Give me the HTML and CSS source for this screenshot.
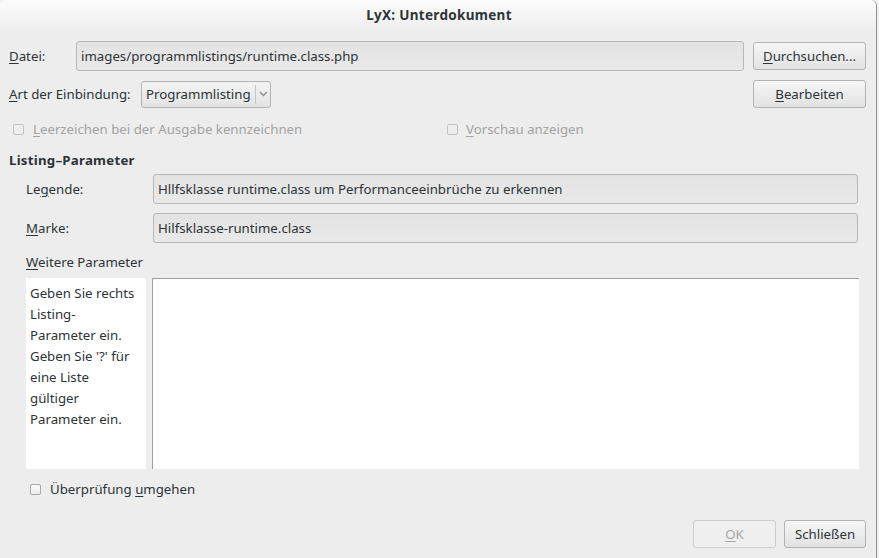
FILE: index.html
```html
<!DOCTYPE html>
<html>
<head>
<meta charset="utf-8">
<link rel="stylesheet" href="styles.css">
</head>
<body>
<div class="window">
  <div class="titlebar">LyX: Unterdokument</div>
  <div class="content">
    <div class="row row-file">
      <span class="lbl lbl-file"><u>D</u>atei:</span>
      <div class="field field-file">images/programmlistings/runtime.class.php</div>
      <button class="btn"><u>D</u>urchsuchen...</button>
    </div>
    <div class="row row-type">
      <span class="lbl lbl-type"><u>A</u>rt der Einbindung:</span>
      <div class="combo"><span class="combo-text">Programmlisting</span><span class="combo-arrow"><svg width="9" height="6" viewBox="0 0 9 6"><path d="M1 1 L4.5 4.5 L8 1" fill="none" stroke="#8a8a8a" stroke-width="1.3"/></svg></span></div>
      <div class="spacer"></div>
      <button class="btn"><u>B</u>earbeiten</button>
    </div>
    <div class="row row-checks">
      <label class="check disabled check-a"><span class="box"></span><span><u>L</u>eerzeichen bei der Ausgabe kennzeichnen</span></label>
      <label class="check disabled check-b"><span class="box"></span><span><u>V</u>orschau anzeigen</span></label>
    </div>
    <div class="section-title">Listing–Parameter</div>
    <div class="group">
      <div class="row row-param">
        <span class="lbl lbl-param">Le<u>g</u>ende:</span>
        <div class="field field-param">Hllfsklasse runtime.class um Performanceeinbrüche zu erkennen</div>
      </div>
      <div class="row row-param row-param2">
        <span class="lbl lbl-param"><u>M</u>arke:</span>
        <div class="field field-param">Hilfsklasse-runtime.class</div>
      </div>
      <div class="more-title"><u>W</u>eitere Parameter</div>
      <div class="more">
        <div class="hint">Geben Sie rechts<br>Listing-<br>Parameter ein.<br>Geben Sie '?' für<br>eine Liste<br>gültiger<br>Parameter ein.</div>
        <div class="textarea"></div>
      </div>
      <label class="check check-bypass"><span class="box"></span><span>Überprüfung <u>u</u>mgehen</span></label>
    </div>
    <div class="footer">
      <button class="btn btn-ok" disabled><u>O</u>K</button>
      <button class="btn btn-close">Schließen</button>
    </div>
  </div>
</div>
</body>
</html>
```
FILE: styles.css
```css
* { box-sizing: border-box; }
html, body {
  margin: 0;
  padding: 0;
  background: #f2f2f2;
}
body {
  font-family: "Noto Sans", "DejaVu Sans", sans-serif;
  font-size: 13.25px;
  color: #2e3436;
  width: 879px;
  height: 558px;
  overflow: hidden;
}
u { text-decoration: underline; text-underline-offset: 2px; text-decoration-thickness: 1px; }
.window {
  width: 877px;
  height: 558px;
  background: #ededed;
  border-right: 1px solid #8e8e8e;
  border-top-left-radius: 6px;
  border-top-right-radius: 6px;
  display: flex;
  flex-direction: column;
}
.titlebar {
  height: 32px;
  line-height: 30px;
  text-align: center;
  font-weight: bold;
  font-size: 13.5px;
  letter-spacing: 0.3px;
  color: #2e3436;
  background: linear-gradient(#fdfdfd, #ededed);
  border-top-left-radius: 6px;
  border-top-right-radius: 6px;
  padding-left: 2px;
}
.content {
  flex: 1;
  padding: 9px 10px 9px 9px;
  display: flex;
  flex-direction: column;
}
.row {
  display: flex;
  align-items: center;
}
.lbl { white-space: nowrap; }
.lbl-file { width: 67px; }
.field {
  height: 30px;
  line-height: 28px;
  padding: 0 4px;
  border: 1px solid #b9b9b9;
  border-radius: 3px;
  background: linear-gradient(#e3e3e3, #e9e9e9);
  white-space: nowrap;
  overflow: hidden;
}
.field-file { width: 668px; margin-right: 9px; }
.btn {
  font-family: inherit;
  font-size: 13.25px;
  color: #2e3436;
  height: 28px;
  width: 113px;
  border: 1px solid #b3b3b3;
  border-radius: 3px;
  background: linear-gradient(#f6f6f6, #e2e2e2);
  padding: 0;
}
.row-type { margin-top: 9px; height: 28px; }
.lbl-type { width: 132px; }
.combo {
  display: flex;
  align-items: center;
  height: 27px;
  width: 130px;
  border: 1px solid #b3b3b3;
  border-radius: 3px;
  background: linear-gradient(#f4f4f4, #e3e3e3);
  padding-left: 4px;
}
.combo-text { flex: 1; white-space: nowrap; }
.combo-arrow {
  width: 15px;
  height: 19px;
  border-left: 1px solid #c4c4c4;
  display: flex;
  align-items: center;
  justify-content: center;
}
.spacer { flex: 1; }
.row-checks { margin-top: 10px; height: 22px; }
.check {
  display: flex;
  align-items: center;
  gap: 9px;
  white-space: nowrap;
}
.check .box {
  width: 11px;
  height: 11px;
  border: 1px solid #a8a8a8;
  border-radius: 2px;
  background: linear-gradient(#fafafa, #ececec);
}
.check.disabled { color: #a3a3a3; }
.check.disabled .box { border-color: #c3c3c3; background: #eeeeee; }
.check-a { margin-left: 4px; width: 434px; }
.check-b { gap: 8px; }
.section-title {
  margin-top: 10px;
  font-weight: bold;
  letter-spacing: 0.25px;
  height: 20px;
  line-height: 20px;
}
.group { padding-left: 17px; display: flex; flex-direction: column; }
.row-param { margin-top: 4px; }
.row-param2 { margin-top: 9px; }
.lbl-param { width: 127px; }
.field-param { width: 705px; }
.more-title { margin-top: 9px; height: 20px; line-height: 20px; }
.more {
  margin-top: 6px;
  display: flex;
  height: 191px;
  gap: 6px;
}
.hint {
  width: 120px;
  background: #ffffff;
  padding: 5px 4px 0 4px;
  line-height: 21px;
}
.textarea {
  width: 707px;
  background: #ffffff;
  border-top: 1px solid #9f9f9f;
  border-left: 1px solid #9f9f9f;
}
.check-bypass { margin-top: 9px; margin-left: 4px; height: 22px; }
.footer {
  margin-top: auto;
  display: flex;
  justify-content: flex-end;
  gap: 8px;
  padding-bottom: 1px;
}
.btn-ok {
  width: 83px;
  color: #a8a8a8;
  background: #efefef;
  border-color: #cdcdcd;
}
.btn-close { width: 82px; }
```
